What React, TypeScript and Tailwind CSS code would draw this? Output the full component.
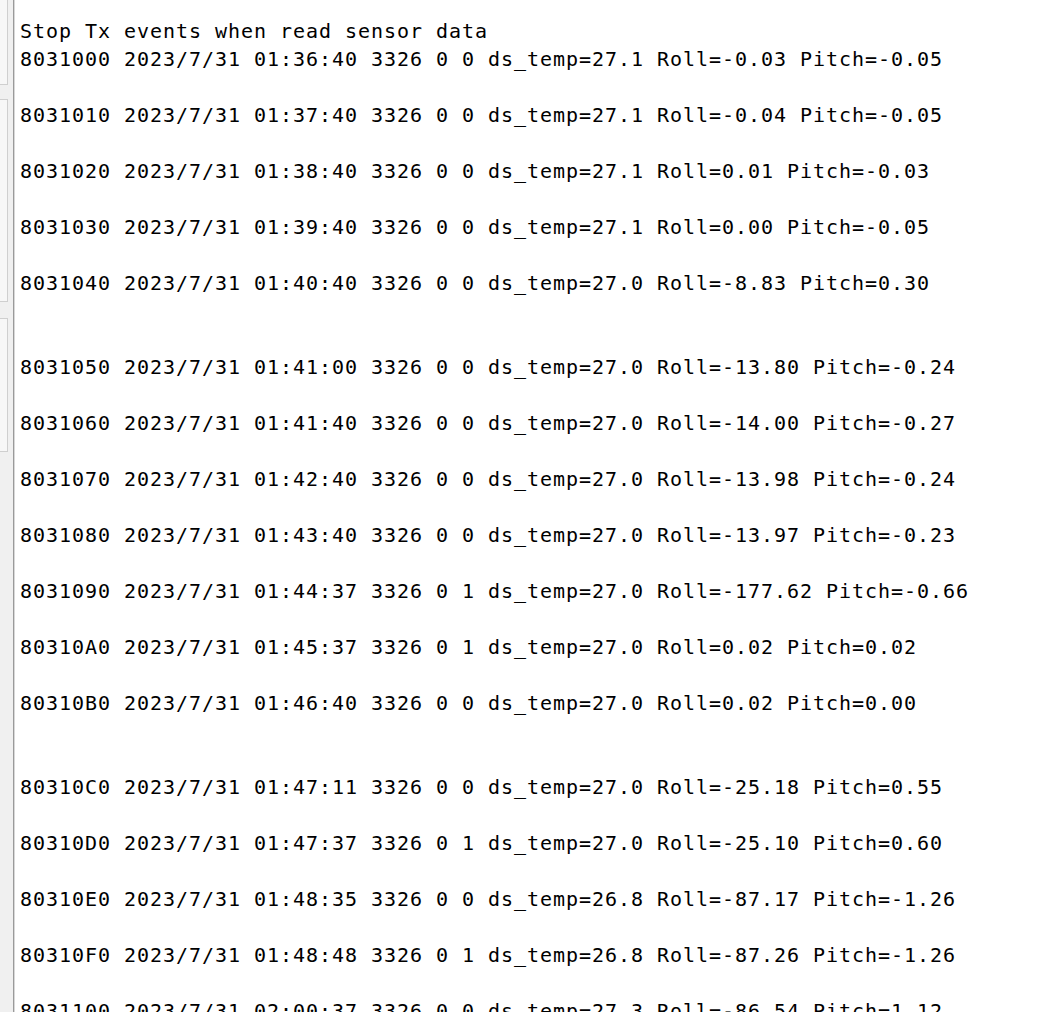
const rows: string[] = [
  'Stop Tx events when read sensor data',
  '8031000 2023/7/31 01:36:40 3326 0 0 ds_temp=27.1 Roll=-0.03 Pitch=-0.05',
  '',
  '8031010 2023/7/31 01:37:40 3326 0 0 ds_temp=27.1 Roll=-0.04 Pitch=-0.05',
  '',
  '8031020 2023/7/31 01:38:40 3326 0 0 ds_temp=27.1 Roll=0.01 Pitch=-0.03',
  '',
  '8031030 2023/7/31 01:39:40 3326 0 0 ds_temp=27.1 Roll=0.00 Pitch=-0.05',
  '',
  '8031040 2023/7/31 01:40:40 3326 0 0 ds_temp=27.0 Roll=-8.83 Pitch=0.30',
  '',
  '',
  '8031050 2023/7/31 01:41:00 3326 0 0 ds_temp=27.0 Roll=-13.80 Pitch=-0.24',
  '',
  '8031060 2023/7/31 01:41:40 3326 0 0 ds_temp=27.0 Roll=-14.00 Pitch=-0.27',
  '',
  '8031070 2023/7/31 01:42:40 3326 0 0 ds_temp=27.0 Roll=-13.98 Pitch=-0.24',
  '',
  '8031080 2023/7/31 01:43:40 3326 0 0 ds_temp=27.0 Roll=-13.97 Pitch=-0.23',
  '',
  '8031090 2023/7/31 01:44:37 3326 0 1 ds_temp=27.0 Roll=-177.62 Pitch=-0.66',
  '',
  '80310A0 2023/7/31 01:45:37 3326 0 1 ds_temp=27.0 Roll=0.02 Pitch=0.02',
  '',
  '80310B0 2023/7/31 01:46:40 3326 0 0 ds_temp=27.0 Roll=0.02 Pitch=0.00',
  '',
  '',
  '80310C0 2023/7/31 01:47:11 3326 0 0 ds_temp=27.0 Roll=-25.18 Pitch=0.55',
  '',
  '80310D0 2023/7/31 01:47:37 3326 0 1 ds_temp=27.0 Roll=-25.10 Pitch=0.60',
  '',
  '80310E0 2023/7/31 01:48:35 3326 0 0 ds_temp=26.8 Roll=-87.17 Pitch=-1.26',
  '',
  '80310F0 2023/7/31 01:48:48 3326 0 1 ds_temp=26.8 Roll=-87.26 Pitch=-1.26',
  '',
  '8031100 2023/7/31 02:00:37 3326 0 0 ds_temp=27.3 Roll=-86.54 Pitch=1.12',
];

function SidePanel() {
  return (
    <div className="flex w-[13px] shrink-0 flex-col bg-[#f0f0f0]">
      <div className="h-[85px] w-[8px] border-r border-b border-[#cfcfcf] bg-[#f7f7f7]" />
      <div className="mt-[14px] h-[203px] w-[8px] border-y border-r border-[#cfcfcf] bg-[#f7f7f7]" />
      <div className="mt-[16px] h-[134px] w-[8px] border-y border-r border-[#cfcfcf] bg-[#f7f7f7]" />
    </div>
  );
}

export default function App() {
  return (
    <div className="flex h-[1012px] w-full overflow-hidden bg-white">
      <SidePanel />
      <div className="w-[1px] shrink-0 bg-[#9a9a9a]" />
      <div className="w-[1px] shrink-0 bg-[#d8d8d8]" />
      <pre className="flex-1 overflow-hidden pt-[17px] pl-[5px] font-['DejaVu_Sans_Mono',monospace] text-[20px] leading-[28px] tracking-[0.96px] text-black">
        {rows.map((row, i) => (
          <div key={i} className="h-[28px] whitespace-pre">
            {row}
          </div>
        ))}
      </pre>
    </div>
  );
}
